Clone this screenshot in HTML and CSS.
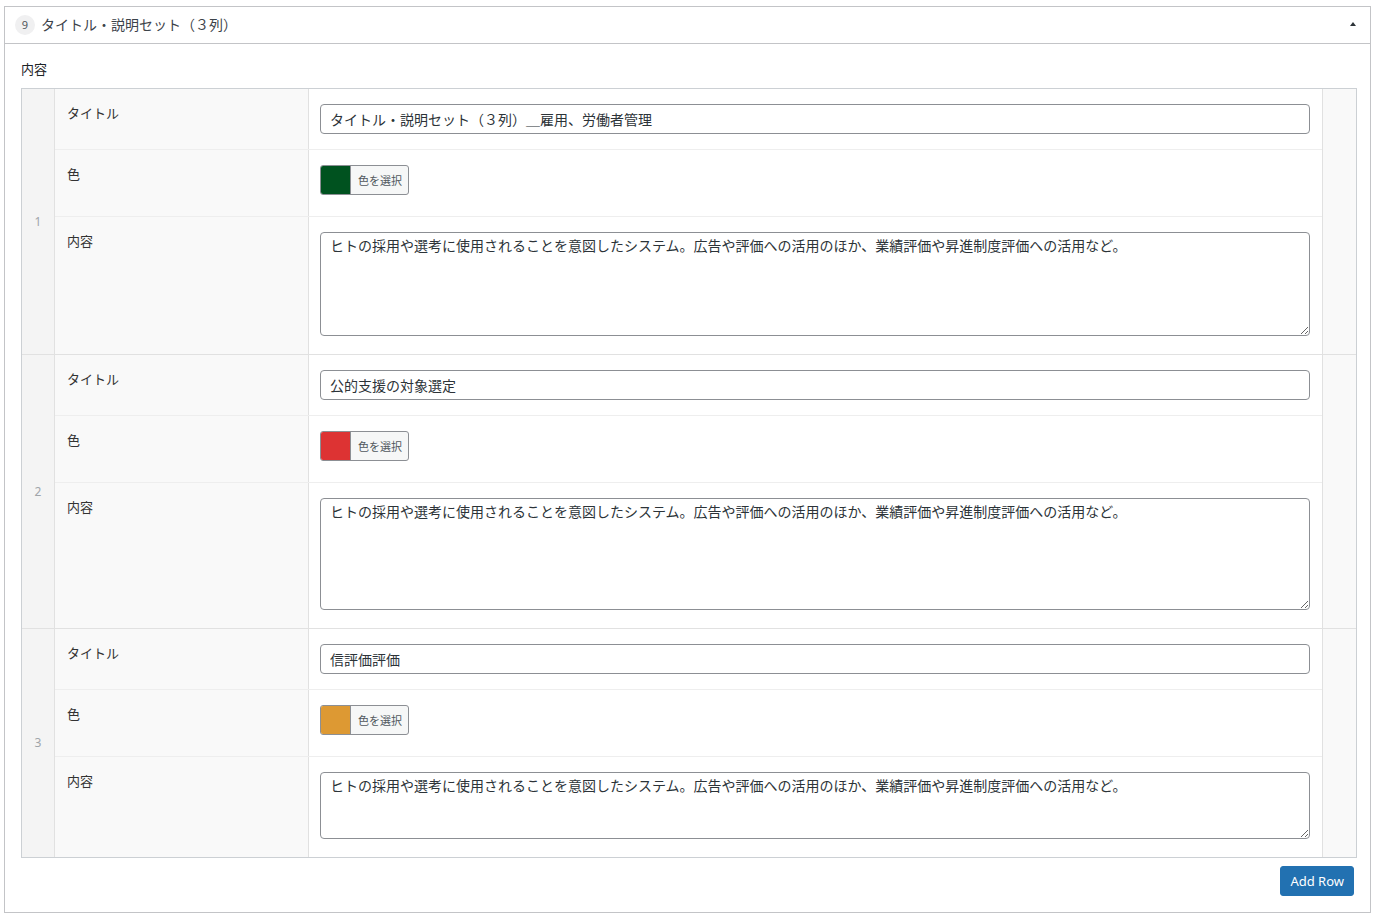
FILE: index.html
```html
<!DOCTYPE html>
<html lang="ja">
<head>
<meta charset="utf-8">
<title>タイトル・説明セット（３列）</title>
<link rel="stylesheet" href="styles.css">
</head>
<body>
<div class="postbox">
  <div class="postbox-header">
    <span class="badge">9</span>
    <h2 class="postbox-title">タイトル・説明セット（３列）</h2>
    <span class="toggle"></span>
  </div>
  <div class="postbox-inside">
    <div class="field-label">内容</div>
    <div class="repeater">
      <div class="rep-row">
        <div class="order">1</div>
        <div class="fields">
          <div class="field field-title">
            <div class="label">タイトル</div>
            <div class="input"><input class="text" type="text" value="タイトル・説明セット（３列）＿雇用、労働者管理"></div>
          </div>
          <div class="field field-color">
            <div class="label">色</div>
            <div class="input"><button class="color-btn" type="button"><span class="swatch swatch-green"></span><span class="color-text">色を選択</span></button></div>
          </div>
          <div class="field field-content">
            <div class="label">内容</div>
            <div class="input"><textarea class="area area-1">ヒトの採用や選考に使用されることを意図したシステム。広告や評価への活用のほか、業績評価や昇進制度評価への活用など。</textarea></div>
          </div>
        </div>
        <div class="remove"></div>
      </div>
      <div class="rep-row">
        <div class="order">2</div>
        <div class="fields">
          <div class="field field-title">
            <div class="label">タイトル</div>
            <div class="input"><input class="text" type="text" value="公的支援の対象選定"></div>
          </div>
          <div class="field field-color">
            <div class="label">色</div>
            <div class="input"><button class="color-btn" type="button"><span class="swatch swatch-red"></span><span class="color-text">色を選択</span></button></div>
          </div>
          <div class="field field-content">
            <div class="label">内容</div>
            <div class="input"><textarea class="area area-2">ヒトの採用や選考に使用されることを意図したシステム。広告や評価への活用のほか、業績評価や昇進制度評価への活用など。</textarea></div>
          </div>
        </div>
        <div class="remove"></div>
      </div>
      <div class="rep-row">
        <div class="order">3</div>
        <div class="fields">
          <div class="field field-title">
            <div class="label">タイトル</div>
            <div class="input"><input class="text" type="text" value="信評価評価"></div>
          </div>
          <div class="field field-color">
            <div class="label">色</div>
            <div class="input"><button class="color-btn" type="button"><span class="swatch swatch-orange"></span><span class="color-text">色を選択</span></button></div>
          </div>
          <div class="field field-content">
            <div class="label">内容</div>
            <div class="input"><textarea class="area area-3">ヒトの採用や選考に使用されることを意図したシステム。広告や評価への活用のほか、業績評価や昇進制度評価への活用など。</textarea></div>
          </div>
        </div>
        <div class="remove"></div>
      </div>
    </div>
    <div class="actions">
      <button class="add-row" type="button">Add Row</button>
    </div>
  </div>
</div>
</body>
</html>
```

FILE: styles.css
```css
* { box-sizing: border-box; }

html, body {
  margin: 0;
  background: #ffffff;
}

body {
  padding: 6px 4px 0 4px;
  font-family: "Noto Sans", "Noto Sans CJK JP", sans-serif;
  color: #3c434a;
  font-size: 13px;
}

.postbox {
  border: 1px solid #c3c4c7;
  background: #fff;
}

.postbox-header {
  display: flex;
  align-items: center;
  height: 37px;
  border-bottom: 1px solid #c3c4c7;
  padding: 0 14px 3px 10px;
}

.badge {
  display: inline-flex;
  align-items: center;
  justify-content: center;
  width: 20px;
  height: 20px;
  border-radius: 50%;
  background: #f0f0f1;
  color: #50575e;
  font-size: 11px;
  margin-right: 6px;
  margin-top: 2px;
}

.postbox-title {
  margin: 0;
  flex: 1;
  font-family: "Noto Sans CJK JP", sans-serif;
  font-size: 14px;
  font-weight: 400;
  color: #3c434a;
}

.toggle {
  width: 0;
  height: 0;
  border-left: 3px solid transparent;
  border-right: 3px solid transparent;
  border-bottom: 4px solid #2c3338;
}

.postbox-inside {
  padding: 16px 13px 16px 16px;
}

.field-label {
  font-family: "Noto Sans CJK JP", sans-serif;
  font-size: 13px;
  line-height: 18px;
  color: #1d2327;
  margin-bottom: 10px;
}

.repeater {
  border: 1px solid #ccd0d4;
}

.rep-row {
  display: grid;
  grid-template-columns: 33px 1fr 34px;
  border-top: 1px solid #e1e1e1;
}

.rep-row:first-child {
  border-top: 0;
}

.order {
  background: #f4f4f4;
  border-right: 1px solid #e1e1e1;
  color: #a0a5aa;
  font-size: 12px;
  display: flex;
  align-items: center;
  justify-content: center;
  padding-bottom: 1px;
}

.remove {
  background: #f9f9f9;
  border-left: 1px solid #e1e1e1;
}

.fields {
  display: flex;
  flex-direction: column;
}

.field {
  display: grid;
  grid-template-columns: 254px 1fr;
  border-top: 1px solid #eeeeee;
}

.field:first-child {
  border-top: 0;
}

.label {
  background: #f9f9f9;
  border-right: 1px solid #e1e1e1;
  padding: 15px 12px;
  font-family: "Noto Sans CJK JP", sans-serif;
  font-size: 13px;
  line-height: 18px;
  color: #333333;
}

.input {
  padding: 15px 12px 15px 11px;
}

.field-content .input {
  padding-bottom: 14px;
}

.text {
  display: block;
  width: 100%;
  height: 30px;
  border: 1px solid #8c8f94;
  border-radius: 4px;
  padding: 0 9px;
  font-family: "Noto Sans CJK JP", sans-serif;
  font-size: 14px;
  color: #2c3338;
  background: #fff;
  margin: 0;
}

.color-btn {
  display: flex;
  align-items: stretch;
  height: 30px;
  width: 89px;
  padding: 0;
  margin: 0 0 6px 0;
  border: 1px solid #8c8f94;
  border-radius: 3px;
  background: #f6f7f7;
  overflow: hidden;
  cursor: pointer;
}

.swatch {
  width: 30px;
  border-right: 1px solid #8c8f94;
}

.swatch-green { background: #00521f; }
.swatch-red { background: #dd3333; }
.swatch-orange { background: #dd9933; }

.color-text {
  flex: 1;
  display: flex;
  align-items: center;
  justify-content: center;
  font-family: "Noto Sans CJK JP", sans-serif;
  font-size: 11px;
  color: #50575e;
  padding: 0 0 1px 1px;
}

.area {
  display: block;
  width: 100%;
  margin: 0 0 4px 0;
  border: 1px solid #8c8f94;
  border-radius: 4px;
  padding: 2px 9px;
  font-family: "Noto Sans CJK JP", sans-serif;
  font-size: 14px;
  line-height: 20px;
  color: #2c3338;
  background: #fff;
  resize: vertical;
}

.area-1 { height: 104px; }
.area-2 { height: 112px; }
.area-3 { height: 67px; }

.actions {
  display: flex;
  justify-content: flex-end;
  padding-top: 8px;
  padding-right: 3px;
}

.add-row {
  height: 30px;
  padding: 0 9px;
  border: 1px solid #2271b1;
  border-radius: 3px;
  background: #2271b1;
  color: #ffffff;
  font-family: "Noto Sans", sans-serif;
  font-size: 13px;
  line-height: 28px;
  cursor: pointer;
}
```
